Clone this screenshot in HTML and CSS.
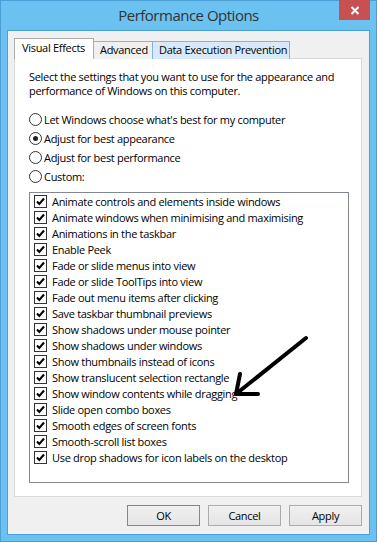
FILE: index.html
```html
<!DOCTYPE html>
<html>
<head>
<meta charset="utf-8">
<link rel="stylesheet" href="styles.css">
</head>
<body>
<div class="window">
  <div class="titlebar">
    <div></div>
    <div class="title">Performance Options</div>
    <div class="close"><svg width="10" height="9" viewBox="0 0 10 9"><path d="M1.5 1 L8.5 8 M8.5 1 L1.5 8" stroke="#fff" stroke-width="2" fill="none"/></svg></div>
  </div>
  <div class="client">
    <div class="tabs">
      <div class="tab sel t1">Visual Effects</div>
      <div class="tab t2">Advanced</div>
      <div class="tab hover t3">Data Execution Prevention</div>
    </div>
    <div class="panel">
      <p class="intro">Select the settings that you want to use for the appearance and performance of Windows on this computer.</p>
      <div class="radios">
        <div class="radio"><span class="rb"></span>Let Windows choose what's best for my computer</div>
        <div class="radio"><span class="rb on"></span>Adjust for best appearance</div>
        <div class="radio"><span class="rb"></span>Adjust for best performance</div>
        <div class="radio"><span class="rb"></span>Custom:</div>
      </div>
      <div class="list">
        <div class="item"><span class="cb"></span>Animate controls and elements inside windows</div>
        <div class="item"><span class="cb"></span>Animate windows when minimising and maximising</div>
        <div class="item"><span class="cb"></span>Animations in the taskbar</div>
        <div class="item"><span class="cb"></span>Enable Peek</div>
        <div class="item"><span class="cb"></span>Fade or slide menus into view</div>
        <div class="item"><span class="cb"></span>Fade or slide ToolTips into view</div>
        <div class="item"><span class="cb"></span>Fade out menu items after clicking</div>
        <div class="item"><span class="cb"></span>Save taskbar thumbnail previews</div>
        <div class="item"><span class="cb"></span>Show shadows under mouse pointer</div>
        <div class="item"><span class="cb"></span>Show shadows under windows</div>
        <div class="item"><span class="cb"></span>Show thumbnails instead of icons</div>
        <div class="item"><span class="cb"></span>Show translucent selection rectangle</div>
        <div class="item"><span class="cb"></span>Show window contents while dragging</div>
        <div class="item"><span class="cb"></span>Slide open combo boxes</div>
        <div class="item"><span class="cb"></span>Smooth edges of screen fonts</div>
        <div class="item"><span class="cb"></span>Smooth-scroll list boxes</div>
        <div class="item"><span class="cb"></span>Use drop shadows for icon labels on the desktop</div>
      </div>
    </div>
    <div class="buttons">
      <div class="btn default">OK</div>
      <div class="btn">Cancel</div>
      <div class="btn">Apply</div>
    </div>
  </div>
  <svg class="arrow" width="80" height="70" viewBox="0 0 80 70"><path d="M76 7 L6 63 M10 43 L6 63 L28 63" stroke="#000" stroke-width="4" stroke-linecap="round" stroke-linejoin="round" fill="none"/></svg>
</div>
</body>
</html>
```
FILE: styles.css
```css
* { box-sizing: border-box; }
html, body { margin: 0; padding: 0; }
body {
  font-family: "Open Sans", "Noto Sans", sans-serif;
  font-size: 11px;
  letter-spacing: -0.3px;
  color: #000;
  background: #6bc1f0;
}
.window {
  position: relative;
  width: 377px;
  height: 542px;
  background: #6bc1f0;
  border: 1px solid #4b9fd6;
  padding: 0 6px 6px 6px;
  display: flex;
  flex-direction: column;
}
.titlebar {
  height: 29px;
  display: grid;
  grid-template-columns: 1fr auto 1fr;
  align-items: start;
}
.title {
  font-size: 15px;
  letter-spacing: -0.5px;
  color: #333;
  line-height: 28px;
}
.close {
  justify-self: end;
  width: 31px;
  height: 20px;
  margin-top: -1px;
  background: #c75050;
  display: flex;
  align-items: center;
  justify-content: center;
}
.close svg { display: block; }
.client {
  flex: 1;
  background: #f0f0f0;
  border: 1px solid #4b9fd6;
  padding: 7px 7px 8px 6px;
  display: flex;
  flex-direction: column;
}
.tabs {
  display: flex;
  align-items: flex-end;
  height: 21px;
  margin-bottom: -1px;
  position: relative;
  z-index: 1;
}
.tab {
  height: 18px;
  border: 1px solid #acacac;
  border-bottom: none;
  background: #f0f0f0;
  line-height: 16px;
  padding: 0 0 0 6px;
  margin-left: -1px;
  white-space: nowrap;
}
.tab.t1 { margin-left: 0; width: 80px; padding-left: 7px; }
.tab.t2 { width: 60px; }
.tab.t3 { width: 138px; }
.tab.sel {
  height: 21px;
  background: #fff;
  line-height: 18px;
}
.tab.hover {
  background: #d8eaf9;
  border-color: #7eb4ea;
  position: relative;
  z-index: 2;
}
.panel {
  flex: 1;
  background: #fff;
  border: 1px solid #d9d9d9;
  padding: 11px 12px 0 14px;
}
.intro {
  margin: 0;
  line-height: 14px;
}
.radios {
  margin-top: 12px;
}
.radio {
  height: 19px;
  display: flex;
  align-items: center;
}
.rb {
  width: 13px;
  height: 13px;
  border: 1px solid #333;
  border-radius: 50%;
  background: #fff;
  margin-right: 2px;
  display: flex;
  align-items: center;
  justify-content: center;
}
.rb.on::after {
  content: "";
  width: 5px;
  height: 5px;
  border-radius: 50%;
  background: #222;
}
.list {
  margin-top: 6px;
  width: 320px;
  height: 291px;
  border: 1px solid #828790;
  padding: 0 0 0 4px;
}
.item {
  height: 16px;
  display: flex;
  align-items: center;
  white-space: nowrap;
}
.cb {
  width: 13px;
  height: 13px;
  border: 1px solid #333;
  background: #fff url("data:image/svg+xml;utf8,<svg xmlns='http://www.w3.org/2000/svg' width='11' height='11' viewBox='0 0 11 11'><path d='M2 5.5 L4.3 8 L9 2.5' stroke='black' stroke-width='2' fill='none'/></svg>") no-repeat center;
  margin-right: 5px;
  flex: none;
}
.buttons {
  display: flex;
  justify-content: flex-end;
  gap: 8px;
  margin-top: 8px;
}
.btn {
  width: 73px;
  height: 21px;
  border: 1px solid #acacac;
  background: linear-gradient(#f0f0f0, #e5e5e5);
  text-align: center;
  line-height: 19px;
}
.btn.default { border-color: #3399ff; }
.arrow {
  position: absolute;
  left: 229px;
  top: 330px;
}
```
